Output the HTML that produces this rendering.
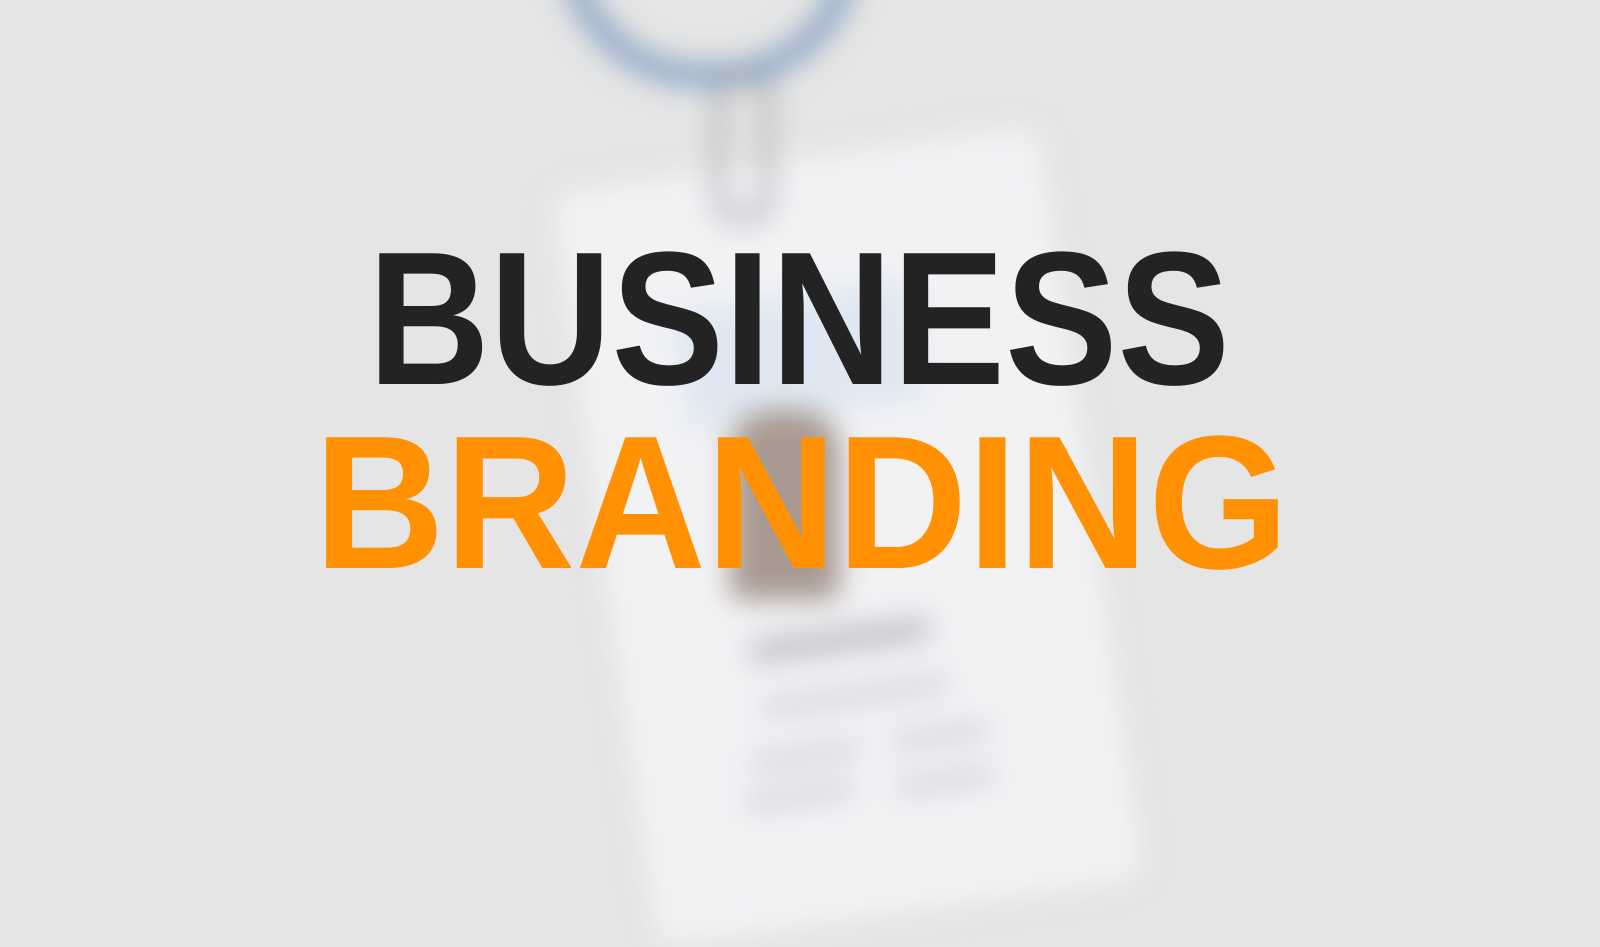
<!DOCTYPE html>
<html><head><meta charset="utf-8"><style>
html,body{margin:0;padding:0;width:1600px;height:817px;overflow:hidden;background:#e5e5e5;}
.bg{position:absolute;inset:0;filter:blur(14px);}
.card{position:absolute;left:550px;top:160px;width:490px;height:760px;background:#f2f2f5;border-radius:20px;transform:rotate(-8deg);transform-origin:50% 0;}
.ring{position:absolute;left:560px;top:-110px;width:260px;height:175px;border:20px solid #7f9cc0;border-top:none;border-radius:0 0 140px 140px;}
.clip{position:absolute;left:715px;top:75px;width:40px;height:130px;border:8px solid #9a9ba0;border-radius:20px;}
.photo{position:absolute;left:730px;top:410px;width:110px;height:190px;background:#a89a90;border-radius:40px 40px 10px 10px;}
.line{position:absolute;background:#c9c9cf;height:12px;border-radius:6px;transform:rotate(-8deg);}
.blue{position:absolute;left:680px;top:295px;width:240px;height:120px;background:#dfe8f2;transform:rotate(-8deg);}
svg{position:absolute;left:0;top:0;}
</style></head><body>
<div class="bg">
<div class="card"></div>
<div class="ring"></div>
<div class="clip"></div>
<div class="blue"></div>
<div class="photo"></div>
<div class="line" style="left:750px;top:630px;width:180px;height:20px;background:#b8b8be"></div>
<div class="line" style="left:760px;top:690px;width:190px"></div>
<div class="line" style="left:750px;top:750px;width:110px"></div>
<div class="line" style="left:890px;top:730px;width:100px"></div>
<div class="line" style="left:745px;top:790px;width:110px"></div>
<div class="line" style="left:895px;top:775px;width:100px"></div>
</div>
<svg width="1600" height="817">
<text x="368" y="384" textLength="862" lengthAdjust="spacingAndGlyphs" font-family="Liberation Sans, sans-serif" font-weight="bold" font-size="190" fill="#232323">BUSINESS</text>
<text x="314" y="568" textLength="975" lengthAdjust="spacingAndGlyphs" font-family="Liberation Sans, sans-serif" font-weight="bold" font-size="190" fill="#ff9102">BRANDING</text>
</svg>
</body></html>
